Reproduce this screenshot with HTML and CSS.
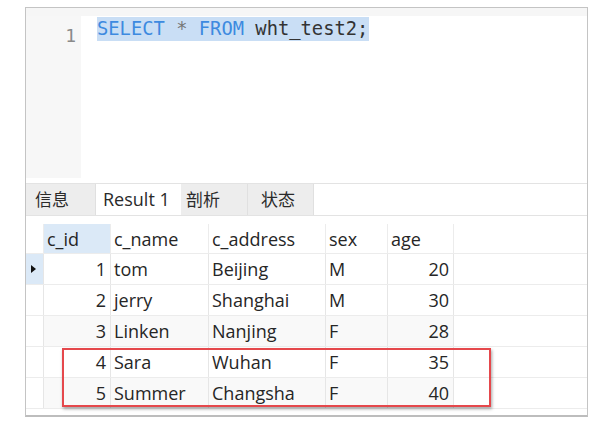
FILE: index.html
```html
<!DOCTYPE html>
<html>
<head>
<meta charset="utf-8">
<link rel="stylesheet" href="styles.css">
</head>
<body>
<div class="frame">
  <div class="editor">
    <div class="gutter"><span class="ln">1</span></div>
    <div class="code">
      <div class="line"><span class="sel"><span class="kw">SELECT</span> <span class="op">*</span> <span class="kw">FROM</span> wht_test2;</span></div>
    </div>
  </div>
  <div class="tabs">
    <div class="tab cjk">信息</div>
    <div class="tab active">Result 1</div>
    <div class="tab cjk">剖析</div>
    <div class="tab cjk">状态</div>
  </div>
  <div class="grid">
    <div class="row head">
      <div class="cell ind"></div>
      <div class="cell c1 hl">c_id</div>
      <div class="cell c2">c_name</div>
      <div class="cell c3">c_address</div>
      <div class="cell c4">sex</div>
      <div class="cell c5">age</div>
    </div>
    <div class="row">
      <div class="cell ind hl"><span class="arrow"></span></div>
      <div class="cell c1 num">1</div>
      <div class="cell c2">tom</div>
      <div class="cell c3">Beijing</div>
      <div class="cell c4">M</div>
      <div class="cell c5 num">20</div>
    </div>
    <div class="row">
      <div class="cell ind"></div>
      <div class="cell c1 num">2</div>
      <div class="cell c2">jerry</div>
      <div class="cell c3">Shanghai</div>
      <div class="cell c4">M</div>
      <div class="cell c5 num">30</div>
    </div>
    <div class="row alt">
      <div class="cell ind"></div>
      <div class="cell c1 num">3</div>
      <div class="cell c2">Linken</div>
      <div class="cell c3">Nanjing</div>
      <div class="cell c4">F</div>
      <div class="cell c5 num">28</div>
    </div>
    <div class="row">
      <div class="cell ind"></div>
      <div class="cell c1 num">4</div>
      <div class="cell c2">Sara</div>
      <div class="cell c3">Wuhan</div>
      <div class="cell c4">F</div>
      <div class="cell c5 num">35</div>
    </div>
    <div class="row alt">
      <div class="cell ind"></div>
      <div class="cell c1 num">5</div>
      <div class="cell c2">Summer</div>
      <div class="cell c3">Changsha</div>
      <div class="cell c4">F</div>
      <div class="cell c5 num">40</div>
    </div>
  </div>
  <div class="mark"></div>
</div>
</body>
</html>
```

FILE: styles.css
```css
* { box-sizing: border-box; }
html, body { margin: 0; padding: 0; background: #fff; }
body { width: 592px; height: 426px; overflow: hidden; }

.frame {
  position: relative;
  margin: 7px 0 0 25px;
  width: 563px;
  height: 410px;
  border: 1px solid #c4c4c4;
  border-bottom: 2px solid #bdbdbd;
  background: #fff;
  font-family: "Open Sans", "Noto Sans", sans-serif;
  color: #2a2a2a;
}

.editor {
  display: flex;
  height: 170px;
  border-top: 8px solid #f6f6f6;
}
.gutter {
  width: 55px;
  background: #f7f7f7;
  text-align: right;
  padding-right: 5px;
  padding-top: 9px;
}
.ln {
  font-family: "DejaVu Sans Mono", monospace;
  font-size: 18px;
  color: #8a8a8a;
}
.code {
  flex: 1;
  padding-left: 16px;
  padding-top: 1px;
}
.line {
  font-family: "DejaVu Sans Mono", monospace;
  font-size: 18.8px;
  line-height: 24px;
  color: #333;
}
.sel { background: #c9def5; display: inline-block; padding-right: 1px; }
.kw { color: #3d8ae0; }
.op { color: #777; }

.tabs {
  display: flex;
  margin-top: 5px;
  height: 33px;
  border-top: 1px solid #e3e3e3;
  border-bottom: 1px solid #e3e3e3;
}
.tab {
  height: 31px;
  background: #ededed;
  font-size: 18px;
  line-height: 30px;
  color: #2a2a2a;
  border-right: 1px solid #e0e0e0;
}
.tab.cjk {
  font-family: "Noto Sans CJK SC", sans-serif;
  font-size: 17px;
}
.tab:nth-child(1) { width: 70px; padding-left: 9px; }
.tab:nth-child(2) { width: 85px; padding-left: 7px; background: #fff; border-right: none; }
.tab:nth-child(3) { width: 67px; padding-left: 5px; }
.tab:nth-child(4) { width: 66px; padding-left: 13px; }

.grid {
  margin-top: 8px;
  display: flex;
  flex-direction: column;
}
.row {
  display: flex;
  height: 31px;
  border-bottom: 1px solid #ececec;
}
.row.head { height: 30px; }
.row.alt .cell { background: #f9f9f9; }
.row.alt .cell.ind { background: #fff; }
.cell {
  font-size: 18px;
  line-height: 30px;
  padding: 0 4px 0 3px;
  border-right: 1px solid #e6e6e6;
  white-space: nowrap;
  color: #262626;
}
.cell.num { text-align: right; padding-right: 4px; }
.ind { width: 18px; padding: 0; position: relative; }
.c1 { width: 67px; }
.c2 { width: 98px; }
.c3 { width: 117px; }
.c4 { width: 62px; }
.c5 { width: 66px; }
.row.head .cell { border-right: 1px solid #ececec; }
.cell.hl, .row .cell.ind.hl { background: #dbe9f7; }
.arrow {
  position: absolute;
  left: 5px;
  top: 11px;
  width: 0;
  height: 0;
  border-top: 4px solid transparent;
  border-bottom: 4px solid transparent;
  border-left: 5px solid #111;
}

.mark {
  position: absolute;
  left: 36px;
  top: 340px;
  width: 429px;
  height: 59px;
  border: 2px solid #e5484c;
  box-shadow: 1px 2px 3px rgba(0,0,0,0.35);
}
```
